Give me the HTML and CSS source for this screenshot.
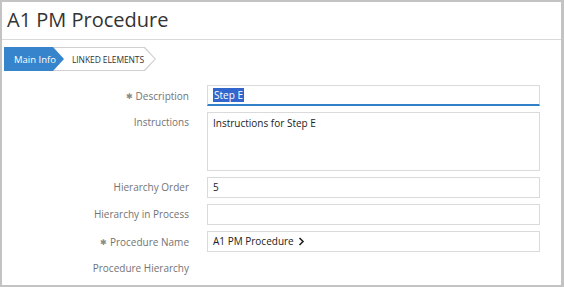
FILE: index.html
```html
<!DOCTYPE html>
<html lang="en">
<head>
  <meta charset="UTF-8">
  <title>A1 PM Procedure</title>
  <link rel="stylesheet" href="styles.css">
</head>
<body>
  <div class="frame">
    <div class="header">
      <span class="title">A1 PM Procedure</span>
    </div>

    <!-- Tabs -->
    <div class="tabs">
      <div class="tab tab-active">Main Info</div>
      <div class="tab tab-linked"><span>LINKED ELEMENTS</span></div>
    </div>

    <div class="form">
      <div class="label"><span class="req">&#10033;</span> Description</div>
      <div class="field field-focus"><span class="selected">Step E</span></div>

      <div class="label label-top">Instructions</div>
      <div class="field field-area">Instructions for Step E</div>

      <div class="label">Hierarchy Order</div>
      <div class="field">5</div>

      <div class="label">Hierarchy in Process</div>
      <div class="field"></div>

      <div class="label"><span class="req">&#10033;</span> Procedure Name</div>
      <div class="field">A1 PM Procedure
        <svg class="chev" width="7" height="9" viewBox="0 0 7 9"><path d="M1.5 1 L5 4.5 L1.5 8" fill="none" stroke="#222" stroke-width="1.6"/></svg>
      </div>

      <div class="label">Procedure Hierarchy</div>
      <div></div>
    </div>
  </div>
</body>
</html>
```
FILE: styles.css
```css
body {
  margin: 0;
  font-family: "Open Sans", sans-serif;
  background: #ffffff;
}

.frame {
  width: 564px;
  height: 287px;
  box-sizing: border-box;
  border-style: solid;
  border-color: #c3c3c3;
  border-width: 2px 3px 2px 2px;
  background: #ffffff;
}

.header {
  height: 38px;
  border-bottom: 1px solid #d9d9d9;
  padding-left: 5px;
  box-sizing: border-box;
  display: flex;
  align-items: center;
}

.title {
  font-size: 20px;
  color: #333333;
  margin-top: -2px;
}

/* Tabs */
.tabs {
  display: flex;
  margin: 7px 0 0 2px;
  height: 24px;
}

.tab {
  height: 24px;
  display: flex;
  align-items: center;
  box-sizing: border-box;
}

.tab-active {
  position: relative;
  z-index: 2;
  width: 60px;
  padding-left: 10px;
  background: #3584cc;
  color: #ffffff;
  font-size: 9.5px;
  clip-path: polygon(0 0, 49px 0, 60px 50%, 49px 100%, 0 100%);
}

.tab-linked {
  position: relative;
  width: 103px;
  margin-left: -11px;
  padding-left: 19px;
  background: #d0d0d0;
  color: #333333;
  font-size: 8.5px;
  letter-spacing: -0.1px;
  clip-path: polygon(0 0, 92px 0, 103px 50%, 92px 100%, 0 100%);
}

.tab-linked::before {
  content: "";
  position: absolute;
  inset: 1px 0 1px 0;
  background: #ffffff;
  clip-path: polygon(0 0, 91px 0, 101.6px 50%, 91px 100%, 0 100%);
}

.tab-linked span {
  position: relative;
}

/* Form */
.form {
  display: grid;
  grid-template-columns: 187px 333px;
  column-gap: 18px;
  row-gap: 6px;
  margin-top: 14px;
}

.label {
  font-size: 10px;
  color: #737373;
  text-align: right;
  height: 21px;
  line-height: 21px;
}

.label-top {
  line-height: 20px;
}

.req {
  font-size: 8px;
  color: #8a8a8a;
  vertical-align: 1px;
}

.field {
  height: 21px;
  box-sizing: border-box;
  border: 1px solid #dadada;
  padding: 0 5px;
  font-size: 10px;
  color: #222222;
  line-height: 19px;
  display: flex;
  align-items: center;
  gap: 4px;
}

.field-focus {
  border-bottom: 2px solid #2f80c9;
}

.field-area {
  height: 59px;
  align-items: flex-start;
  padding-top: 1px;
}

.selected {
  background: #3366cc;
  color: #ffffff;
  padding: 0 1px;
  line-height: 14px;
}

.chev {
  display: block;
}
```
